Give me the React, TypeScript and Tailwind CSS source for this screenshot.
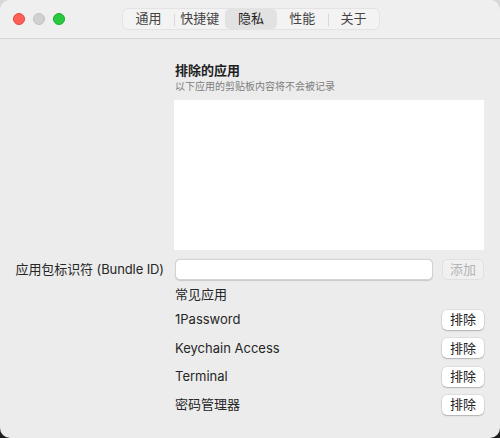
import React from 'react';

const tabs = ['通用', '快捷键', '隐私', '性能', '关于'];
const apps = ['1Password', 'Keychain Access', 'Terminal', '密码管理器'];

export default function App() {
  const active = 2;

  return (
    <div className="w-[500px] h-[438px] bg-gradient-to-b from-[#d9d9d9] to-[#1c1c1c] font-['Inter','Noto_Sans_CJK_SC',sans-serif] text-[#262626]">
      <div className="w-full h-full rounded-[10px] overflow-hidden bg-[#ececec] flex flex-col">
        {/* title bar */}
        <div className="h-[39px] shrink-0 bg-[#f0efef] border-b border-[#d6d6d6] flex items-center relative">
          <div className="flex items-center gap-[8px] pl-[13px]">
            <span className="w-[12px] h-[12px] rounded-full bg-[#fe5f57] border border-[#e2463f]" />
            <span className="w-[12px] h-[12px] rounded-full bg-[#d0d0d0] border border-[#c2c2c2]" />
            <span className="w-[12px] h-[12px] rounded-full bg-[#28c840] border border-[#1aab29]" />
          </div>
          <div className="absolute left-[122px] top-[8px] h-[22px] w-[258px] flex items-stretch rounded-[6px] border border-[#e3e3e3] bg-[#f3f3f3]">
            {tabs.map((t, i) => (
              <div
                key={t}
                className={`flex-1 flex items-center justify-center text-[13px] relative ${
                  i === active ? 'bg-[#e2e2e2] rounded-[5px] text-[#222]' : 'text-[#444]'
                }`}
              >
                {i > 0 && i !== active && i !== active + 1 && (
                  <span className="absolute left-0 top-[5px] h-[12px] w-px bg-[#d8d8d8]" />
                )}
                {t}
              </div>
            ))}
          </div>
        </div>

        {/* content */}
        <div className="flex-1 pt-[23px] pr-[16px]">
          <div className="pl-[175px]">
            <div className="text-[13px] font-semibold leading-[16px] text-[#1e1e1e]">排除的应用</div>
            <div className="text-[10px] leading-[14px] text-[#7d7d7d] mt-[1px]">以下应用的剪贴板内容将不会被记录</div>
            <div className="mt-[7px] h-[150px] w-[310px] bg-white ml-[-1px]" />
          </div>

          <div className="flex items-center mt-[9px] h-[21px]">
            <div className="w-[165px] text-right text-[13px] pr-[1px] tracking-[-0.1px]">应用包标识符 (Bundle ID)</div>
            <div className="ml-[10px] w-[258px] h-[21px] bg-white rounded-[5px] border border-[#d3d3d3] shadow-[0_0.5px_1px_rgba(0,0,0,0.15)]" />
            <button className="ml-[9px] w-[42px] h-[21px] rounded-[5px] bg-[#f0f0f0] border border-[#e0e0e0] text-[13px] text-[#b4b4b4] flex items-center justify-center">
              添加
            </button>
          </div>

          <div className="pl-[175px] mt-[5px] text-[13px] leading-[18px]">常见应用</div>

          <div className="pl-[175px] mt-[7px] flex flex-col gap-[8px]">
            {apps.map((a) => (
              <div key={a} className="flex items-center justify-between h-[20.3px]">
                <span className="text-[13px]">{a}</span>
                <button className="w-[42px] h-[20px] rounded-[5px] bg-white text-[13px] text-[#222] shadow-[0_0_0_0.5px_rgba(0,0,0,0.12),0_1px_1.5px_rgba(0,0,0,0.2)] flex items-center justify-center">
                  排除
                </button>
              </div>
            ))}
          </div>
        </div>
      </div>
    </div>
  );
}
